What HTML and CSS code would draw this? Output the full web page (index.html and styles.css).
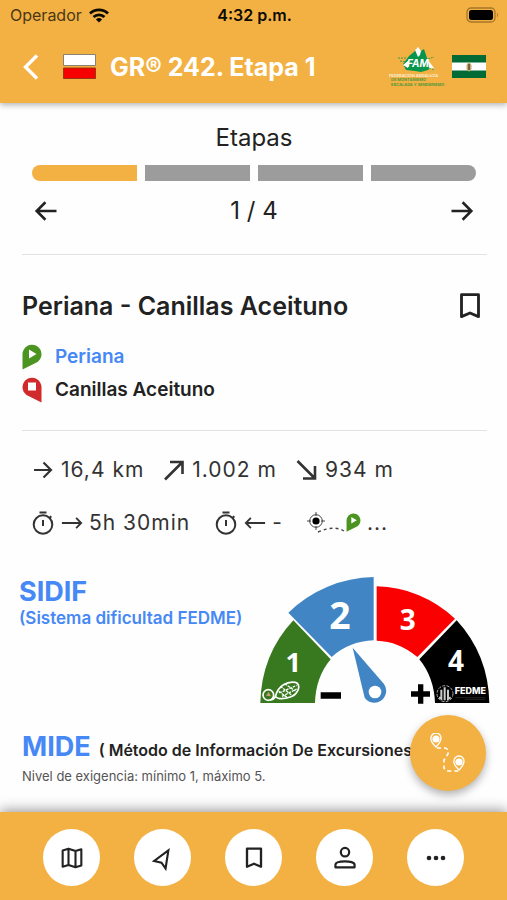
FILE: index.html
```html
<!DOCTYPE html>
<html lang="es">
<head>
<meta charset="utf-8">
<meta name="viewport" content="width=device-width, initial-scale=1">
<title>GR® 242. Etapa 1</title>
<link rel="stylesheet" href="styles.css">
</head>
<body>
<svg class="defs" aria-hidden="true">
  <symbol id="bookmark" viewBox="0 0 24 24"><path d="M6 4h12v15.500l-6-2.600-6 2.600z" fill="none" stroke="currentColor" stroke-width="2" stroke-linejoin="round"/></symbol>
  <symbol id="arrow" viewBox="0 0 24 24"><path d="M3 12h17M12.500 4.500 20 12l-7.500 7.500" fill="none" stroke="currentColor" stroke-width="2.200"/></symbol>
  <symbol id="arrow-thin" viewBox="0 0 24 24"><path d="M1 12h21M16.500 6.500 22 12l-5.500 5.500" fill="none" stroke="currentColor" stroke-width="2"/></symbol>
  <symbol id="slope" viewBox="0 0 24 24"><path d="M3 21.500 20 4.500M8 4h12.500V16" fill="none" stroke="currentColor" stroke-width="2.600"/></symbol>
  <symbol id="timer" viewBox="0 0 24 24"><g fill="none" stroke="currentColor" stroke-width="2"><circle cx="12" cy="13.500" r="9.300"/><path d="M8.500 1.500h7M12 9v6M18.500 7l1.800-1.800"/></g></symbol>
  <symbol id="start" viewBox="0 0 20 26"><path d="M0.500 25.500V10A9.500 9.500 0 1 1 15.500 18z" fill="#4c9420"/><path d="M7 5.500v9l7.500-4.500z" fill="#fff"/></symbol>
  <symbol id="end" viewBox="0 0 20 26"><path d="M19.500 25.500V10A9.500 9.500 0 1 0 4.500 18z" fill="#d12a2c"/><path d="M6 5.500h8v8H6z" fill="#fff"/></symbol>
</svg>

<div class="app">
  <header class="header">
    <div class="status">
      <div class="carrier">Operador
        <svg class="wifi" viewBox="0 0 20 15" aria-hidden="true"><g fill="none" stroke="#0d0a04" stroke-width="2.800"><path d="M1 5.500a13 13 0 0 1 18 0"/><path d="M4.500 9a8 8 0 0 1 11 0"/></g><path d="M10 14.500 6.900 11.400a4.500 4.500 0 0 1 6.200 0z" fill="#0d0a04"/></svg>
      </div>
      <time class="clock">4:32 p.m.</time>
      <svg class="battery" viewBox="0 0 33 16" aria-hidden="true"><rect x="1" y="1" width="28" height="14" rx="4" fill="none" stroke="#a57729" stroke-width="1.300"/><rect x="3" y="3" width="24" height="10" rx="2.500" fill="#000"/><path d="M31 5.500q2 2.500 0 5z" fill="#a57729"/></svg>
    </div>
    <div class="appbar">
      <button class="plain back" aria-label="Volver"><svg viewBox="0 0 16 26"><path d="M14.500 1.500 3 13l11.500 11.500" fill="none" stroke="#fff" stroke-width="3.400"/></svg></button>
      <svg class="gr-flag" viewBox="0 0 33 25" aria-hidden="true"><g stroke-width="1"><path d="M.5.500h32v11H.5z" fill="#fff" stroke="#8b8172"/><path d="M.5 14h32v10.500H.5z" fill="#f70000" stroke="#9b3512"/></g></svg>
      <h1 class="appbar-title">GR® 242. Etapa 1</h1>
      <svg class="fam" viewBox="0 0 56 40" role="img" aria-label="FAM">
        <path d="M14 17 20 9l5-4 3-4 4 3 3-2 3 9 5 9-4 3-7 2-6-1-9-1z" fill="#07954b"/>
        <path d="m26 3 3-3 3 4-1 4-2 2zM39 13l6 8-5 1zM14 18l6-5-1 8z" fill="#fff"/>
        <path d="M9 11h8M39 12l6-2M11 14l6 1M40 21l5 2" stroke="#3f9d43" stroke-width="1" stroke-dasharray="2 1"/>
        <text class="fam-name" x="18" y="20">FAM</text>
        <text class="fam-line fam-light" x="0" y="30">FEDERACIÓN ANDALUZA</text>
        <text class="fam-line" x="2" y="34">DE MONTAÑISMO</text>
        <text class="fam-line" x="2" y="39">ESCALADA Y SENDERISMO</text>
      </svg>
      <svg class="andalucia" viewBox="0 0 34 23" role="img" aria-label="Andalucía"><path d="M0 0h34v23H0z" fill="#006b35"/><path d="M0 7.500h34v8H0z" fill="#fff"/><path d="M14.500 10q2.500-5 5 0v4q-2.500 5-5 0z" fill="#c9a968"/><path d="M16 9h2v6h-2z" fill="#73654a"/></svg>
    </div>
  </header>

  <main class="content">
    <section class="stages">
      <h2 class="stages-title">Etapas</h2>
      <div class="steps"><span class="step step-on"></span><span class="step"></span><span class="step"></span><span class="step"></span></div>
      <div class="pager">
        <button class="plain" aria-label="Anterior"><svg class="i28 flip"><use href="#arrow"/></svg></button>
        <span>1 / 4</span>
        <button class="plain" aria-label="Siguiente"><svg class="i28"><use href="#arrow"/></svg></button>
      </div>
    </section>

    <section class="route">
      <div class="route-head">
        <h2 class="route-title">Periana - Canillas Aceituno</h2>
        <button class="plain" aria-label="Guardar"><svg class="i34"><use href="#bookmark"/></svg></button>
      </div>
      <div class="place"><svg class="pin"><use href="#start"/></svg><a href="#periana">Periana</a></div>
      <div class="place"><svg class="pin"><use href="#end"/></svg><span>Canillas Aceituno</span></div>
    </section>

    <section class="stats">
      <div class="stat-row">
        <div class="stat"><svg class="i24"><use href="#arrow"/></svg>16,4 km</div>
        <div class="stat"><svg class="i24"><use href="#slope"/></svg>1.002 m</div>
        <div class="stat"><svg class="i24 down"><use href="#slope"/></svg>934 m</div>
      </div>
      <div class="stat-row times">
        <div class="stat"><svg class="i24"><use href="#timer"/></svg><svg class="i22"><use href="#arrow-thin"/></svg>5h 30min</div>
        <div class="stat"><svg class="i24"><use href="#timer"/></svg><svg class="i22 flip"><use href="#arrow-thin"/></svg>-</div>
        <div class="stat"><svg class="approach" viewBox="0 0 54 22" aria-hidden="true"><g fill="none" stroke="#444"><circle cx="9" cy="9" r="6.300"/><path d="M9 0v4M9 14v4M0 9h4M14 9h4"/><path d="M11 20q16-7 26-1" stroke-width="1.400" stroke-dasharray="3 3"/></g><circle cx="9" cy="9" r="3.600" fill="#000"/><svg x="39" y="1" width="15" height="19"><use href="#start"/></svg></svg>...</div>
      </div>
    </section>

    <section class="sidif">
      <a class="sidif-label" href="#sidif"><strong class="big">SIDIF</strong><span>(Sistema dificultad FEDME)</span></a>
      <svg class="gauge" viewBox="30 32 690 384" role="img" aria-label="Dificultad 2">
        <path d="M130 165 242 282Q197 336 195 413H31Q34 268 130 165z" fill="#38791f"/>
        <path d="M115 142A376 376 0 0 1 371 35V225Q297 228 245 275z" fill="#4285c5"/>
        <path d="M380 63A350 350 0 0 1 615 160L502 275Q447 228 380 226z" fill="#fb0000"/>
        <path d="M620 165Q715 268 718 413H555Q552 336 508 282z" fill="#000"/>
        <g class="gauge-num"><text x="130" y="319" font-size="82">1</text><text x="270" y="191" font-size="112">2</text><text x="473" y="195" font-size="84">3</text><text x="618" y="318" font-size="84">4</text></g>
        <path d="M308 247 402 356A35 35 0 1 1 344 397z" fill="#4285c5"/><circle cx="375" cy="380" r="19" fill="#fff"/>
        <path d="M212 381h61v19h-61zM483 378h57v16h-57zM504 357h16v58h-16z" fill="#000"/>
        <g fill="none" stroke="#fff" stroke-width="5"><circle cx="55" cy="389" r="16"/><path d="M60 404q12 0 17-13c8-30 35-44 59-40 19 5 10 35-15 44-25 9-45 5-44-4"/><path stroke-width="4" d="M91 363l35 27M104 355l32 22M86 378l28 20M88 383l52-23M96 393l44-22" stroke-dasharray="8 3"/></g><path d="m48 391 8-11 7 13z" fill="#ca9c77"/>
        <circle cx="585" cy="385" r="24" fill="none" stroke="#aaa" stroke-width="3" stroke-dasharray="9 4"/><path d="M574 373v27l-7-4M584 366v39M594 373v28l8-5" fill="none" stroke="#ccc" stroke-width="6"/>
        <text class="fedme" x="614" y="387">FEDME</text><path d="M616 397h91M645 402h61" stroke="#333" stroke-width="2"/>
      </svg>
    </section>

    <section class="mide">
      <div class="mide-head"><a class="big" href="#mide">MIDE</a><strong>( Método de Información De Excursiones )</strong></div>
      <p>Nivel de exigencia: mínimo 1, máximo 5.</p>
    </section>
  </main>

  <footer class="footer">
    <button class="fab" aria-label="Ver ruta">
      <svg viewBox="0 0 38 40"><g fill="none" stroke="#fff" stroke-width="1.300"><path d="M7 14Q1 8 2 5a5 5 0 0 1 10 0q0 4-5 9zM30 37q-6-6-5-9a5 5 0 0 1 10 0q0 4-5 9z"/><path d="M8 15h8q4 1 3 6l-4 6v8q1 3 6 3h10" stroke-width="1.600" stroke-dasharray="4 3"/></g><circle cx="7" cy="6" r="3.600" fill="#fff"/><circle cx="30" cy="29" r="3.600" fill="#fff"/></svg>
    </button>
    <nav class="nav">
      <button class="round" aria-label="Mapa"><svg class="i28" viewBox="0 0 24 24"><path d="M4 5.500 9 4l6 2 5-1.500v14L15 20l-6-2-5 1.500zM9 4v14M15 6v14" fill="none" stroke="currentColor" stroke-width="1.800" stroke-linejoin="round"/></svg></button>
      <button class="round" aria-label="Navegar"><svg class="i28" viewBox="0 0 24 24"><path d="M16.600 5.400 4.400 14.600l6.300 1.400 3.500 5z" fill="none" stroke="currentColor" stroke-width="1.800"/></svg></button>
      <button class="round" aria-label="Guardados"><svg class="i28"><use href="#bookmark"/></svg></button>
      <button class="round" aria-label="Perfil"><svg class="i28" viewBox="0 0 24 24"><g fill="none" stroke="currentColor" stroke-width="1.900"><circle cx="12" cy="7" r="3.600"/><path d="M3.800 20v-2.200c0-4 16.400-4 16.400 0V20z" stroke-linejoin="round"/></g></svg></button>
      <button class="round" aria-label="Más"><svg class="i28" viewBox="0 0 24 24"><g fill="currentColor"><circle cx="6" cy="12" r="2"/><circle cx="12" cy="12" r="2"/><circle cx="18" cy="12" r="2"/></g></svg></button>
    </nav>
  </footer>
</div>
</body>
</html>
```
FILE: styles.css
```css
* { box-sizing: border-box; }
body { margin: 0; background: #fefefe; color: #222; font-family: Inter, "Liberation Sans", sans-serif; font-size: 19px; }
h1, h2, p { margin: 0; }
a { color: #4688f6; text-decoration: none; }
svg { display: block; flex: none; }
.defs { position: absolute; width: 0; height: 0; }
.plain { display: block; border: 0; padding: 0; background: none; color: inherit; }
.app { display: flex; flex-direction: column; height: 100vh; }

.header { position: relative; z-index: 1; background: #f3b143; box-shadow: 0 2px 6px rgba(0, 0, 0, .3); }
.status { display: grid; grid-template-columns: 1fr auto 1fr; align-items: center; height: 30px; padding: 0 8px 0 10px; color: #0d0a04; font-size: 16px; }
.carrier { display: flex; align-items: center; gap: 7px; color: #4b3716; }
.wifi { width: 20px; height: 15px; }
.clock { font-weight: 600; }
.battery { width: 33px; height: 16px; justify-self: end; }
.appbar { display: flex; align-items: center; height: 73px; padding: 0 21px 0 22px; }
.back { margin-right: 24px; }
.back svg { width: 17px; height: 26px; }
.gr-flag { width: 33px; height: 25px; }
.appbar-title { flex: 1; margin-left: 14px; color: #fff; font-size: 25px; font-weight: 700; line-height: 30px; white-space: nowrap; }
.fam { width: 56px; height: 40px; margin-right: 7px; }
.fam-name { fill: #fff; font-size: 10px; font-style: italic; font-weight: 700; }
.fam-line { fill: #54983a; font-size: 4px; font-weight: 700; }
.fam-light { fill: #f7eed4; }
.andalucia { width: 34px; height: 23px; }

.content { flex: 1; min-height: 0; overflow: hidden; padding: 0 20px 0 22px; }
.stages { padding: 20px 11px 28px 10px; border-bottom: 1px solid #e2e2e2; }
.stages-title { text-align: center; font-size: 24px; font-weight: 400; line-height: 30px; }
.steps { display: flex; gap: 8px; margin-top: 12px; }
.step { flex: 1; height: 16px; background: #9c9c9c; }
.step-on { background: #f3b143; }
.step:first-child { border-radius: 8px 0 0 8px; }
.step:last-child { border-radius: 0 8px 8px 0; }
.pager { display: flex; justify-content: space-between; align-items: center; margin-top: 15px; font-size: 24px; line-height: 30px; }
.i22 { width: 22px; height: 22px; }
.i24 { width: 24px; height: 24px; }
.i28 { width: 28px; height: 28px; }
.i34 { width: 34px; height: 34px; }
.flip { transform: scaleX(-1); }
.down { transform: rotate(90deg); }

.route { padding: 34px 0 24px; border-bottom: 1px solid #e2e2e2; }
.route-head { display: flex; align-items: center; justify-content: space-between; margin-bottom: 17px; }
.route-title { font-size: 25px; font-weight: 600; line-height: 30px; }
.place { display: flex; align-items: center; gap: 13px; height: 33px; font-weight: 600; }
.pin { width: 20px; height: 26px; }

.stats { padding: 12px 0 0 9px; color: #333; font-size: 21px; }
.stat-row { display: flex; gap: 18px; height: 53px; align-items: center; letter-spacing: 1px; white-space: nowrap; }
.times { gap: 24px; }
.stat { display: flex; align-items: center; gap: 6px; }
.approach { width: 54px; height: 22px; }

.sidif { display: flex; justify-content: space-between; margin: 27px -3px 0; }
.sidif-label { display: flex; flex-direction: column; font-size: 17px; font-weight: 600; line-height: 20px; white-space: nowrap; }
.big { font-size: 27px; font-weight: 700; line-height: 32px; }
.gauge { width: 230px; height: 128px; }
.gauge-num { fill: #fff; font-family: "Open Sans", sans-serif; font-weight: 700; text-anchor: middle; }
.fedme { fill: #fff; font-size: 27px; font-weight: 800; }

.mide { padding-top: 27px; }
.mide-head { display: flex; align-items: baseline; gap: 8px; font-size: 16px; white-space: nowrap; }
.mide-head strong { font-weight: 600; }
.mide p { color: #555; font-size: 13px; line-height: 20px; margin-top: 3px; }

.footer { position: relative; background: #f3b143; box-shadow: 0 -2px 12px rgba(0, 0, 0, .4); }
.nav { display: flex; justify-content: space-between; padding: 17px 43px 14px; }
.round { display: grid; place-items: center; width: 57px; height: 57px; padding: 0; border: 0; border-radius: 50%; background: #fff; color: #222; }
.fab { position: absolute; right: 21px; bottom: calc(100% + 21px); display: grid; place-items: center; width: 76px; height: 76px; padding: 0; border: 0; border-radius: 50%; background: #f3b143; box-shadow: 0 4px 8px rgba(0, 0, 0, .3); }
.fab svg { width: 38px; height: 40px; }
```
